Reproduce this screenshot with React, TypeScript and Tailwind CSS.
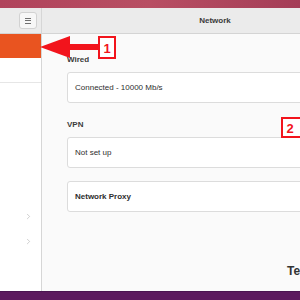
import { ChevronRight } from "lucide-react";

function Card({ children, bold }: { children: React.ReactNode; bold?: boolean }) {
    return (
        <div className={`h-[31px] w-[260px] shrink-0 flex items-center pl-[7px] bg-white border border-[#dcdcdc] rounded-[3px] text-[8px] text-[#2e2e2e] ${bold ? "font-bold" : ""}`}>
            {children}
        </div>
    )
}

function Annotations() {
    return (
        <svg className="absolute left-0 top-0 pointer-events-none" width="300" height="300">
            <polygon points="40,47 70,36 70,58" fill="#f2141c" />
            <rect x="69" y="44" width="30" height="6" fill="#f2141c" />
            <rect x="99" y="37" width="16" height="21" fill="#fff" stroke="#f2141c" strokeWidth="2" />
            <text x="107" y="53" textAnchor="middle" fill="#f2141c" fontSize="13" fontWeight="bold" fontFamily="Liberation Sans, Arial, sans-serif">1</text>
            <rect x="282" y="118" width="24" height="19" fill="#fff" stroke="#f2141c" strokeWidth="2" />
            <text x="290" y="133" textAnchor="middle" fill="#f2141c" fontSize="13" fontWeight="bold" fontFamily="Liberation Sans, Arial, sans-serif">2</text>
        </svg>
    )
}

export default function App() {
    return (
        <div className="relative w-[300px] h-[300px] overflow-hidden flex flex-col font-['Liberation_Sans',Arial,sans-serif]">
            <div className="h-[8px] shrink-0 bg-gradient-to-r from-[#b0445c] via-[#b84e63] to-[#a43d57]" />
            <div className="flex-1 flex flex-row min-h-0 bg-[#fafafa]">
                {/* sidebar */}
                <div className="w-[42px] shrink-0 flex flex-col bg-white border-r border-[#d6d6d6]">
                    <div className="h-[26px] shrink-0 flex items-center justify-end pr-[4px] bg-[#ebebeb] border-b border-[#d4d4d4]">
                        <div className="w-[18px] h-[17px] rounded-[3px] bg-[#f7f7f7] border border-[#d2d2d2] flex flex-col items-center justify-center gap-[1.5px]">
                            <div className="w-[6px] h-[1px] bg-[#707070]" />
                            <div className="w-[6px] h-[1px] bg-[#707070]" />
                            <div className="w-[6px] h-[1px] bg-[#707070]" />
                        </div>
                    </div>
                    <div className="h-[24px] shrink-0 bg-[#e95420]" />
                    <div className="h-[25px] shrink-0 border-b border-[#e6e6e6]" />
                    <div className="h-[121px] shrink-0" />
                    <div className="h-[25px] shrink-0 flex items-center justify-end pr-[8px] text-[#a0a0a0]">
                        <ChevronRight size={9} strokeWidth={1.3} />
                    </div>
                    <div className="h-[25px] shrink-0 flex items-center justify-end pr-[8px] text-[#a0a0a0]">
                        <ChevronRight size={9} strokeWidth={1.3} />
                    </div>
                </div>
                {/* main */}
                <div className="flex-1 min-w-0 flex flex-col">
                    <div className="h-[26px] shrink-0 flex items-center justify-center bg-[#ebebeb] border-b border-[#d4d4d4] text-[8px] font-bold text-[#3a3a3a] pl-[88px]">
                        Network
                    </div>
                    <div className="flex-1 flex flex-col pl-[25px] pt-[21px]">
                        <div className="h-[10px] flex items-center text-[8px] font-bold text-[#3a3a3a]">Wired</div>
                        <div className="mt-[7px]">
                            <Card>Connected - 10000 Mb/s</Card>
                        </div>
                        <div className="mt-[17px] h-[10px] flex items-center text-[8px] font-bold text-[#3a3a3a]">VPN</div>
                        <div className="mt-[7px]">
                            <Card>Not set up</Card>
                        </div>
                        <div className="mt-[13px]">
                            <Card bold>Network Proxy</Card>
                        </div>
                        <div className="flex-1" />
                        <div className="pl-[220px] pb-[11px] text-[12px] font-bold text-[#333] whitespace-nowrap">Test</div>
                    </div>
                </div>
            </div>
            <div className="h-[9px] shrink-0 bg-[#5c1a5e] border-t border-[#4a1450]" />
            <Annotations />
        </div>
    )
}
